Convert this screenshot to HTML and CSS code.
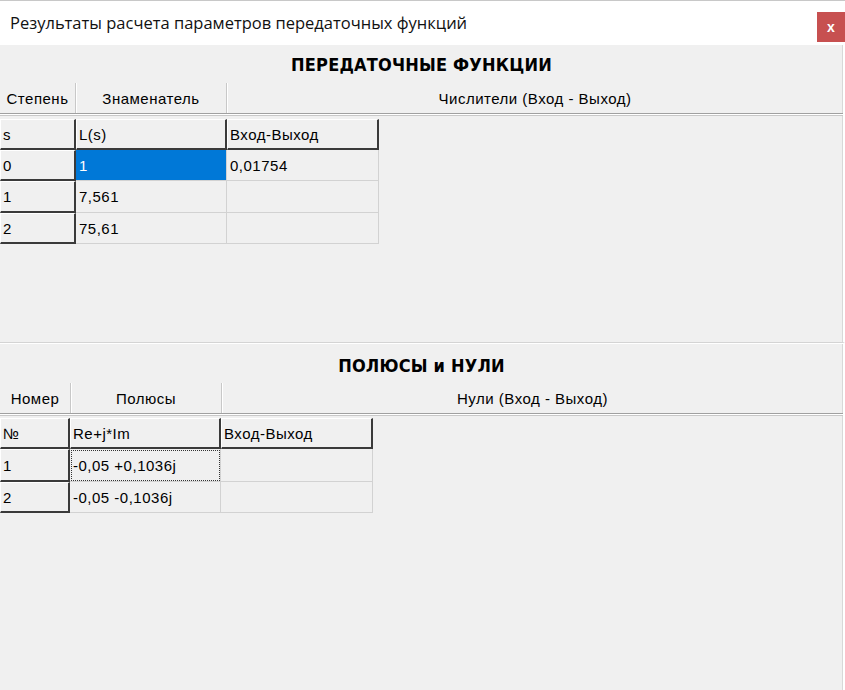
FILE: index.html
```html
<!DOCTYPE html>
<html lang="ru">
<head>
  <meta charset="UTF-8" />
  <title>Результаты расчета параметров передаточных функций</title>
  <link rel="stylesheet" href="styles.css">
</head>
<body>
  <div class="window">
    <div class="titlebar">
      <span class="title">Результаты расчета параметров передаточных функций</span>
      <span class="close">x</span>
    </div>

    <div class="panel panel-top">
      <div class="caption">ПЕРЕДАТОЧНЫЕ ФУНКЦИИ</div>
      <div class="header">
        <div class="hcell w-a">Степень</div>
        <div class="hcell w-b">Знаменатель</div>
        <div class="hcell grow">Числители (Вход - Выход)</div>
      </div>
      <div class="grid grid-top">
        <div class="cell fixed">s</div>
        <div class="cell fixed">L(s)</div>
        <div class="cell fixed">Вход-Выход</div>

        <div class="cell fixed">0</div>
        <div class="cell selected">1</div>
        <div class="cell">0,01754</div>

        <div class="cell fixed">1</div>
        <div class="cell">7,561</div>
        <div class="cell"></div>

        <div class="cell fixed">2</div>
        <div class="cell">75,61</div>
        <div class="cell"></div>
      </div>
    </div>

    <div class="panel panel-bottom">
      <div class="caption">ПОЛЮСЫ и НУЛИ</div>
      <div class="header">
        <div class="hcell w-c">Номер</div>
        <div class="hcell w-d">Полюсы</div>
        <div class="hcell grow">Нули (Вход - Выход)</div>
      </div>
      <div class="grid grid-bottom">
        <div class="cell fixed">№</div>
        <div class="cell fixed">Re+j*Im</div>
        <div class="cell fixed">Вход-Выход</div>

        <div class="cell fixed">1</div>
        <div class="cell focused">-0,05 +0,1036j</div>
        <div class="cell"></div>

        <div class="cell fixed">2</div>
        <div class="cell">-0,05 -0,1036j</div>
        <div class="cell"></div>
      </div>
    </div>
  </div>
</body>
</html>
```

FILE: styles.css
```css
html, body {
  margin: 0;
  padding: 0;
}
body {
  width: 845px;
  height: 690px;
  overflow: hidden;
  background: #f0f0f0;
  font-family: "Liberation Sans", Arial, sans-serif;
  color: #000;
}
.window {
  height: 690px;
  display: flex;
  flex-direction: column;
}
.titlebar {
  height: 44px;
  background: #fff;
  border-top: 1px solid #c8c8c8;
  display: flex;
  align-items: center;
  justify-content: space-between;
  padding-left: 10px;
}
.title {
  font-family: "Open Sans", "Noto Sans", sans-serif;
  font-size: 16.5px;
  color: #111;
  margin-top: -2px;
}
.close {
  width: 28px;
  height: 30px;
  margin-top: 8px;
  background: #c75050;
  color: #fff;
  font-weight: bold;
  font-size: 14px;
  display: flex;
  align-items: center;
  justify-content: center;
}
.panel {
  border-right: 2px solid #fff;
  box-shadow: inset -1px 0 0 #d8d8d8;
}
.panel-top {
  height: 297px;
  border-bottom: 1px solid #d4d4d4;
}
.panel-bottom {
  flex: 1;
  border-top: 1px solid #fff;
}
.caption {
  height: 38px;
  line-height: 40px;
  text-align: center;
  font-weight: bold;
  font-size: 18px;
  letter-spacing: 0.2px;
  font-family: "DejaVu Sans Condensed", "Liberation Sans Narrow", sans-serif;
}
.panel-bottom .caption {
  height: 39px;
  line-height: 43px;
}
.header {
  display: flex;
  height: 30px;
  border-bottom: 1px solid #a0a0a0;
  box-shadow: 0 1px 0 #fff, 0 2px 0 #c8c8c8;
  font-size: 15px;
  letter-spacing: 0.5px;
}
.hcell {
  display: flex;
  align-items: center;
  justify-content: center;
  border-right: 1px solid #c8c8c8;
  box-shadow: 1px 0 0 #fff;
  padding-top: 1px;
}
.hcell.grow {
  flex: 1;
  border-right: none;
  box-shadow: none;
}
.w-a { width: 75px; }
.w-b { width: 150px; }
.w-c { width: 70px; }
.w-d { width: 150px; }

.grid {
  display: grid;
  margin-top: 5px;
  font-size: 15px;
  letter-spacing: 0.5px;
}
.grid-top {
  grid-template-columns: 76px 151px 152px;
  grid-template-rows: 31px 31px 32px 31px;
  width: 379px;
}
.grid-bottom {
  margin-top: 4px;
  grid-template-columns: 70px 151px 152px;
  grid-template-rows: 31px 33px 31px;
  width: 373px;
}
.cell {
  box-sizing: border-box;
  padding-left: 3px;
  display: flex;
  align-items: center;
  border-right: 1px solid #d2d2d2;
  border-bottom: 1px solid #d2d2d2;
  white-space: nowrap;
}
.cell.fixed {
  border-top: 1px solid #fff;
  border-left: 1px solid #fff;
  border-right: 2px solid #3a3a3a;
  border-bottom: 2px solid #3a3a3a;
  padding-left: 2px;
}
.cell.selected {
  background: #0078d7;
  color: #fff;
}
.cell.focused {
  outline: 1px dotted #333;
  outline-offset: -2px;
}
```
